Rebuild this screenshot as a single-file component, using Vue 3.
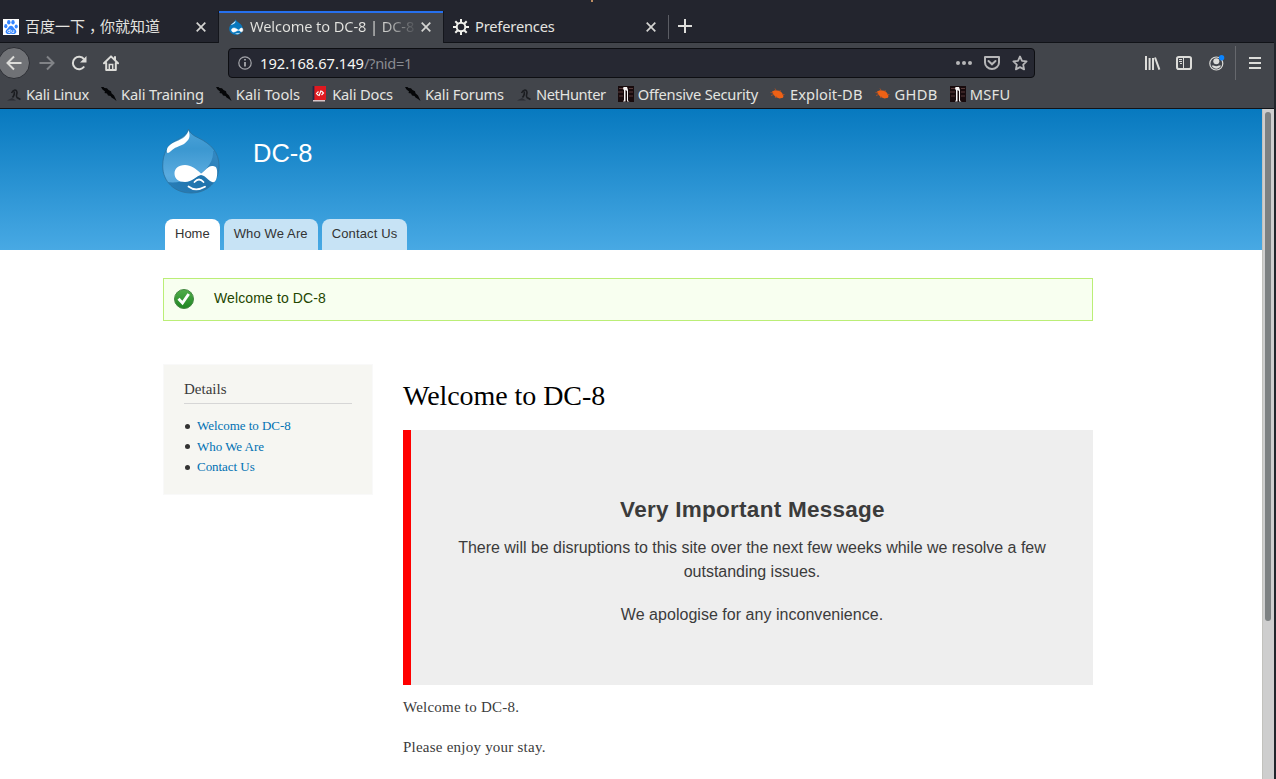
<script setup>
const bookmarks = [
  { name: 'Kali Linux', icon: 'dragon', tracking: -0.3 },
  { name: 'Kali Training', icon: 'slash', tracking: -0.15 },
  { name: 'Kali Tools', icon: 'slash', tracking: 0 },
  { name: 'Kali Docs', icon: 'docs', tracking: -0.17 },
  { name: 'Kali Forums', icon: 'slash', tracking: -0.18 },
  { name: 'NetHunter', icon: 'dragon', tracking: -0.39 },
  { name: 'Offensive Security', icon: 'offsec', tracking: -0.22 },
  { name: 'Exploit-DB', icon: 'bug', tracking: 0.1 },
  { name: 'GHDB', icon: 'bug', tracking: 0.35 },
  { name: 'MSFU', icon: 'offsec', tracking: 0.3 },
]
const menu = ['Home', 'Who We Are', 'Contact Us']
const links = ['Welcome to DC-8', 'Who We Are', 'Contact Us']
</script>

<template>
  <div class="window">
    <div class="frame">
      <div class="tabstrip">
        <div class="tab first">
          <svg class="fav" viewBox="0 0 16 16"><rect width="16" height="16" fill="#fff" /><g fill="#3385ff"><ellipse cx="2.8" cy="7.2" rx="1.6" ry="2.1" /><ellipse cx="5.8" cy="3.3" rx="1.7" ry="2.3" /><ellipse cx="10" cy="3.3" rx="1.7" ry="2.3" /><ellipse cx="13.2" cy="7.5" rx="1.6" ry="2.1" /><path d="M8 6.8C6 6.8 5.5 9 3.7 10.6c-2 1.8-1 4.5 1.5 4.5 1.3 0 1.7-.3 2.8-.3s1.5.3 2.8.3c2.5 0 3.5-2.7 1.5-4.5C10.5 9 10 6.8 8 6.8z" /></g><path d="M7 10v3.500H5.700c-1.500 0-1.500-2.200 0-2.200H7M8.700 11.200v1.600q0 .7.700.7h1.400v-2.300" fill="none" stroke="#fff" stroke-width=".8" /></svg>
          <span class="tabtext cjk">百度一下<span class="comma">，</span>你就知道</span>
          <svg class="close" viewBox="0 0 10 10"><path d="M.7.700l8.600 8.600M9.300.700L.700 9.300" /></svg>
        </div>
        <div class="tab active">
          <svg class="fav" viewBox="0 0 58 66"><path d="M27 1c2 7 8 10 15 15 10 7 15 15 15 25 0 14-12 24-28 24S1 54 1 40C1 28 9 20 17 15 23 11 26 8 27 1z" fill="#0878be" /><path d="M7 25C12 17 22 16 26 7c4 9-8 15-19 18z" fill="#d9f0ff" /><path d="M39 46c-7-5-12-9-18-9-16 0-12 19 0 17 7-1 11-7 18-8 7 1 9 8 14 7 7-3 5-17-2-16-5 1-7 7-12 9zM27 60q8 4 17-1" fill="#fff" stroke="#fff" stroke-width="2" /></svg>
          <span class="tabtext fade">Welcome to DC-8 | DC-8</span>
          <svg class="close" viewBox="0 0 10 10"><path d="M.7.700l8.600 8.600M9.300.700L.700 9.300" /></svg>
        </div>
        <div class="tab prefs">
          <svg class="fav" viewBox="0 0 16 16" fill="none" stroke="#f0f0eb"><circle cx="8" cy="8" r="4.300" stroke-width="2" /><path d="M8 3.500V0M8 12.500V16M3.500 8H0M12.500 8H16M4.800 4.800L2.300 2.300M11.200 11.200l2.500 2.500M11.200 4.800l2.500-2.500M4.800 11.200l-2.500 2.500" stroke-width="2" /></svg>
          <span class="tabtext">Preferences</span>
          <svg class="close" viewBox="0 0 10 10"><path d="M.7.700l8.600 8.600M9.300.700L.700 9.300" /></svg>
        </div>
        <div class="newtab"><svg width="14" height="14" viewBox="0 0 14 14"><path d="M7 0v14M0 7h14" stroke="#dededb" stroke-width="2" /></svg></div>
        <i class="tick"></i>
      </div>

      <div class="nav">
        <div class="back"><svg width="16" height="16" viewBox="0 0 16 16"><path d="M15.500 8H1.500M8 1.500L1.500 8 8 14.500" fill="none" stroke="#dcdcd9" stroke-width="2" /></svg></div>
        <svg class="fwd" viewBox="0 0 16 16"><path d="M.5 8h14M8 1.500L14.500 8 8 14.500" fill="none" stroke="#818387" stroke-width="2" /></svg>
        <svg class="reload" viewBox="0 0 16 16"><path d="M13.200 11.500A6.200 6.200 0 1 1 13 4.200" fill="none" stroke="#dcdcd9" stroke-width="2" /><path d="M15.500 1v6.500H9z" fill="#dcdcd9" /></svg>
        <svg class="home" viewBox="0 0 16 16"><path d="M1 8.300L8 1.400l7 6.900M3.200 8v7h9.600V8M12 2v3" fill="none" stroke="#dcdcd9" stroke-width="2" stroke-linejoin="round" stroke-linecap="round" /><path d="M6.300 15V9.500h3.400V15" fill="none" stroke="#dcdcd9" stroke-width="1.500" /></svg>
        <div class="url">
          <svg class="info" viewBox="0 0 14 14"><circle cx="7" cy="7" r="6.200" fill="none" stroke="#a4a5aa" stroke-width="1.200" /><path d="M7 6v4.500M7 3v1.600" stroke="#b0b1b5" stroke-width="1.700" /></svg>
          <span class="addr">192.168.67.149<b>/?nid=1</b></span>
          <svg class="dots" viewBox="0 0 16 4" fill="#b6b6b8"><circle cx="2" cy="2" r="2" /><circle cx="8" cy="2" r="2" /><circle cx="14" cy="2" r="2" /></svg>
          <svg class="pocket" viewBox="0 0 16 14" fill="none" stroke="#b6b6b8" stroke-width="2"><path d="M1 1h14v5.500a7 6.500 0 0 1-14 0z" stroke-linejoin="round" /><path d="M4.500 5L8 8.300 11.500 5" stroke-linecap="round" /></svg>
          <svg class="star" viewBox="0 0 16 16"><path d="M8 1.500l2 4.300 4.600.600-3.400 3.200.9 4.800L8 12.100l-4.100 2.300.9-4.800L1.400 6.400 6 5.800z" fill="none" stroke="#b6b6b8" stroke-width="1.800" stroke-linejoin="round" /></svg>
        </div>
        <svg class="library" viewBox="0 0 16 14" stroke="#dcdcd9" stroke-width="2"><path d="M1 0v14M4.600 2v12M8 2v12M10 1.500L14.400 13.600" /></svg>
        <svg class="sidebtn" viewBox="0 0 16 14" fill="none" stroke="#dcdcd9"><rect x="1" y="1" width="14" height="12" rx="1.800" stroke-width="2" /><path d="M7.500 1v12M3 3.500h3M3 5.500h3M4 7.500h2" /></svg>
        <svg class="account" viewBox="0 0 16 16"><circle cx="7.300" cy="8.500" r="6.500" fill="none" stroke="#dcdcd9" stroke-width="1.200" /><circle cx="7.300" cy="6.300" r="3" fill="#dcdcd9" /><path d="M2.700 10.500h2a4 3 0 0 0 5.200 0h2c-1.500 4.200-7.700 4.200-9.200 0z" fill="#dcdcd9" /><circle cx="12.600" cy="2.800" r="2.700" fill="#0a84ff" /></svg>
        <i class="sep"></i>
        <i class="burger"></i>
      </div>

      <div class="bookmarks">
        <div v-for="b in bookmarks" :key="b.name" class="bm">
          <svg v-if="b.icon === 'dragon'" viewBox="0 0 16 16"><path d="M5.500 7c2-4 5-4 5.500-.5C11 8.500 9.500 10 11 11.500l3.500 2M8 5.500c1 2 0 4-1.500 6" fill="none" stroke="#1b1d21" stroke-width="1.600" /><path d="M1 14.500l5-2.500 4 2.500z" fill="#2b2d33" /></svg>
          <svg v-else-if="b.icon === 'slash'" viewBox="0 0 16 16"><path d="M0 1l2.500 0 1 1L6 2.200 7.500 4l2.500 1.200.5 2L13 9.500l1.800 3.700L15.500 15l-2.500-2-2.500-1.500-1-1.500-2.500-.5L6 7.500 3.500 7 4 5.500 1.500 3.500z" fill="#050608" /></svg>
          <svg v-else-if="b.icon === 'docs'" viewBox="0 0 16 16"><path d="M2 0h12v14H2z" fill="#df1920" /><path d="M1.500 0v14.500" stroke="#262744" stroke-width="1.800" /><path d="M1 14h12v1.500H1z" fill="#dbc6c8" /><path d="M6.500 5.500L4.500 7.500l2 2M9.500 5l2 2-2 2M9 4.500L7 10" fill="none" stroke="#fff" stroke-width="1.100" /></svg>
          <svg v-else-if="b.icon === 'offsec'" viewBox="0 0 16 16"><path d="M0 0h16v16H0z" fill="#180b0d" /><path d="M1 2.500h4M11 2.500h4M0 6h5M11 6h4M1 10h4M11 10h4" stroke="#583a3a" stroke-width="1.200" /><path d="M5.500 1H9l1 3v10.500l1.500 1H9V5L7.500 4v11.500H5l1-1.500V4L5 3z" fill="#f6f4f4" /></svg>
          <svg v-else viewBox="0 0 16 16"><path d="M2 5.500l3-1.200 4 .4 3 2 1.500 3.300-.5 1.800-3.500.7-4-1.500L3 8z" fill="#ee6115" /><path d="M1 9.500l3-1M5 2.500l1.500 2.500M10 4l.5 2M.5 6.500l3 .5M5 12l1.500-2M12 8.500l2.500 0" stroke="#b9521f" stroke-width=".8" /></svg>
          <span :style="{ letterSpacing: b.tracking + 'px' }">{{ b.name }}</span>
        </div>
      </div>

      <div class="viewport">
        <div class="page">
          <header>
            <div class="brand">
              <svg class="logo" viewBox="0 0 58 66">
                <defs>
                  <linearGradient id="drop" x1="0" y1="0" x2="0" y2="1"><stop offset="0" stop-color="#4da3d9" /><stop offset=".3" stop-color="#3b97d0" /><stop offset=".7" stop-color="#5aabdf" /><stop offset="1" stop-color="#4a9fd6" /></linearGradient>
                  <linearGradient id="shade" x1="1" y1="0" x2="0" y2="1"><stop offset="0" stop-color="#2b7fba" stop-opacity=".6" /><stop offset=".5" stop-color="#1f73ac" /><stop offset="1" stop-color="#2a80ba" /></linearGradient>
                  <clipPath id="dropclip"><path d="M26.500 0c1.500 4.500 5 6.500 10 9C49 15 57 23 57 37c0 16-12 27-28 27S.7 53 .7 37C.7 24 6 16 13 12 20 8.500 25 6 26.500 0z" /></clipPath>
                </defs>
                <g clip-path="url(#dropclip)">
                  <path d="M0 0h58v66H0z" fill="url(#drop)" />
                  <path d="M51 22C52 34 42 45 28 50 20 53 12 54 5 53l10 13h43V22z" fill="url(#shade)" />
                </g>
                <path d="M26.500 0c1.500 4.500 5 6.500 10 9C49 15 57 23 57 37c0 16-12 27-28 27S.7 53 .7 37C.7 24 6 16 13 12 20 8.500 25 6 26.500 0z" fill="none" stroke="#2a6f9b" stroke-width="1" opacity=".75" />
                <path d="M5 23.500C4 18 8 15 14 12.500 21 9.500 25 7 26.500 1.500 29 8 27 11 22 15 16 18 13 18 9 22c-2 2-3.500 2.500-4 1.500z" fill="#fff" />
                <path d="M39 44.500C34 40 29 36 23 36c-7 0-10.500 4-10.500 8.500 0 5 4 8.500 10.500 8.500 7 0 12-6.500 16-7 5 .5 8 7 12 7.200 4 0 4.500-8 4-12-.5-3.500-2-4.200-5-4.200-4 0-7 5-11 7.500z" fill="#fff" />
                <path d="M32.500 53q4.500-5 9 0M26.500 57.500q7 5.500 16.500.2" fill="none" stroke="#fff" stroke-width="1.800" stroke-linecap="round" />
              </svg>
              <div class="site">DC-8</div>
            </div>
            <nav><a v-for="(m, i) in menu" :key="m" :class="{ on: i === 0 }">{{ m }}</a></nav>
          </header>
          <div class="status">
            <svg viewBox="0 0 20 20"><defs><linearGradient id="ok" x2="0" y2="1"><stop stop-color="#51ad4b" /><stop offset="1" stop-color="#1f8622" /></linearGradient></defs><circle cx="10" cy="10" r="9.500" fill="url(#ok)" stroke="#458743" /><path d="M4.500 9.800l4 4.200 6.200-9" fill="none" stroke="#fff" stroke-width="2.900" /></svg>
            <span>Welcome to DC-8</span>
          </div>
          <div class="columns">
            <aside>
              <h2>Details</h2>
              <ul><li v-for="l in links" :key="l"><a>{{ l }}</a></li></ul>
            </aside>
            <main>
              <h1>Welcome to DC-8</h1>
              <div class="notice">
                <h3>Very Important Message</h3>
                <p>There will be disruptions to this site over the next few weeks while we resolve a few outstanding issues.</p>
                <p class="sorry">We apologise for any inconvenience.</p>
              </div>
              <p class="body">Welcome to DC-8.</p>
              <p class="body">Please enjoy your stay.</p>
            </main>
          </div>
        </div>
        <div class="scroll"><i></i></div>
      </div>
    </div>
  </div>
</template>

<style>
body { margin: 0; overflow: hidden; }
</style>
<style scoped>
.window { width: 1276px; height: 779px; background: #21252b; overflow: hidden; }
.frame { width: 1274px; height: 779px; display: flex; flex-direction: column; font-family: "Noto Sans", sans-serif; font-size: 14.67px; color: #e4e4e0; }
.frame * { box-sizing: border-box; }
svg { flex: none; display: block; }
.tabstrip { height: 43px; padding-top: 11px; display: flex; background: #23252e; border-bottom: 1px solid #111318; position: relative; flex: none; }
.tick { position: absolute; left: 591px; top: 0; width: 2px; height: 2px; background: #bd8d62; }
.tab { display: flex; align-items: center; height: 32px; }
.tab.first { width: 219px; padding-left: 3px; border-right: 1px solid #14161c; }
.tab.active { width: 224px; height: 33px; padding: 0 0 1px 9px; background: #42454b; box-shadow: inset 0 2px #2670ee; }
.prefs { width: 225px; padding-left: 9px; border-left: 1px solid #14161c; }
.fav { width: 16px; height: 16px; }
.tabtext { margin-left: 6px; width: 171px; white-space: nowrap; line-height: 24px; padding-bottom: 2px; letter-spacing: -.18px; }
.cjk { font-family: "Noto Sans CJK SC", sans-serif; font-size: 15px; letter-spacing: 0; }
.first .cjk { width: 166px; }
.comma { display: inline-block; width: 15px; text-indent: 4px; }
.active .tabtext { width: 165px; letter-spacing: -.12px; }
.fade { background: linear-gradient(90deg, #e4e4e0 78%, #42454b 102%); background-clip: text; color: transparent; }
.close { width: 10px; height: 10px; margin-left: 5px; fill: none; stroke: #d4d4d2; stroke-width: 1.700; }
.active .close { margin-left: 6px; }
.prefs .close { margin-left: 0; }
.newtab { height: 24px; margin-top: 4px; border-left: 1px solid #5b5d64; padding: 4px 0 0 9px; }
.nav { height: 40px; flex: none; background: #42454b; display: flex; align-items: center; }
.back { width: 32px; height: 32px; margin-left: -2px; border-radius: 50%; background: #707276; border: 1px solid #2c2e34; display: grid; place-items: center; }
.fwd { width: 16px; height: 16px; margin-left: 9px; }
.reload { width: 16px; height: 16px; margin-left: 16px; }
.home { width: 16px; height: 16px; margin-left: 16px; }
.url { width: 807px; height: 30px; margin-left: 109px; background: #262832; border: 1px solid #0d0e12; border-radius: 4px; display: flex; align-items: center; padding-left: 9px; }
.info { width: 14px; height: 14px; }
.addr { width: 688px; margin-left: 8px; color: #f6f6f2; line-height: 24px; }
.addr b { color: #898b91; font-weight: 400; letter-spacing: -.35px; }
.dots { width: 16px; height: 4px; margin-left: 8px; }
.pocket { width: 16px; height: 14px; margin-left: 12px; }
.star { width: 16px; height: 16px; margin-left: 12px; }
.library { width: 16px; height: 14px; margin-left: 110px; }
.sidebtn { width: 16px; height: 14px; margin-left: 15px; }
.account { width: 16px; height: 16px; margin-left: 17px; }
.sep { width: 1px; height: 34px; margin-left: 10px; background: #66686d; }
.burger { width: 12px; height: 12px; margin-left: 13px; background: repeating-linear-gradient(#dcdcd9 0 2px, transparent 2px 5px); }
.bookmarks { height: 26px; flex: none; padding: 0 0 3px 6px; background: #42454b; border-bottom: 1px solid #111318; display: flex; align-items: center; gap: 12px; }
.bm { display: flex; align-items: center; gap: 4px; white-space: nowrap; line-height: 22px; }
.bm svg { width: 16px; height: 16px; }
.viewport { flex: 1; min-height: 0; display: flex; }
.page { width: 1262px; background: #fff; color: #3b3b3b; font-family: "Liberation Serif", serif; }
header { height: 141px; padding: 20px 0 0 162px; background: linear-gradient(#0779bf, #48a9e4); font-family: "Liberation Sans", sans-serif; }
.brand { height: 90px; display: flex; }
.logo { width: 58px; height: 66px; }
.site { margin: 8px 0 0 33px; color: #fff; font-size: 25.5px; line-height: 32px; }
nav { display: flex; gap: 4px; padding-left: 3px; }
nav a { height: 31px; padding: 0 10px; line-height: 29px; border-radius: 8px 8px 0 0; background: #c7e3f5; color: #333; font-size: 13px; letter-spacing: .13px; }
nav a.on { background: #fff; letter-spacing: 0; }
.status { margin: 28px 0 0 163px; width: 930px; height: 43px; border: 1px solid #be7; background: #f8fff0; display: flex; padding: 10px 0 0 10px; font: 14px/20px "Liberation Sans", sans-serif; color: #234600; }
.status svg { width: 20px; height: 20px; }
.status span { margin-left: 20px; line-height: 18px; letter-spacing: .12px; }
.columns { display: flex; align-items: flex-start; margin: 43px 0 0 163px; gap: 30px; }
aside { width: 210px; height: 131px; padding: 15px 20px; background: #f6f6f2; border: 1px solid #f9f9f9; }
h2 { margin: 0; height: 24px; line-height: 19px; font-size: 15px; font-weight: 400; border-bottom: 1px solid #d6d6d6; }
ul { list-style: none; margin: 12px 0 0; padding: 0; }
li { display: flex; align-items: center; height: 20.5px; font-size: 13px; color: #0071b3; letter-spacing: -.04px; }
li::before { content: ""; width: 5px; height: 5px; margin: 0 7px 0 1px; border-radius: 50%; background: #333; }
main { width: 690px; }
h1 { margin: 14px 0 17px; height: 35px; line-height: 35px; font-size: 28px; font-weight: 400; color: #000; letter-spacing: -.06px; }
.notice { height: 255px; border-left: 8px solid #f00; background: #eee; padding: 65px 40px 0; text-align: center; font: 16px/24px "Liberation Sans", sans-serif; }
h3 { margin: 0 0 12px; font-size: 22.5px; line-height: 29px; letter-spacing: .27px; padding-left: 1px; }
.notice p { margin: 0 0 19px; letter-spacing: -.025px; }
.notice p.sorry { letter-spacing: .03px; }
.body { margin: 11px 0 17px; font-size: 15px; line-height: 23px; letter-spacing: .23px; }
.scroll { width: 12px; background: #cecece; padding: 3px 0 0 2px; border-left: 1px solid #c2c2bd; }
.scroll i { display: block; width: 6px; height: 509px; border-radius: 3px; background: #7d8182; }
</style>
